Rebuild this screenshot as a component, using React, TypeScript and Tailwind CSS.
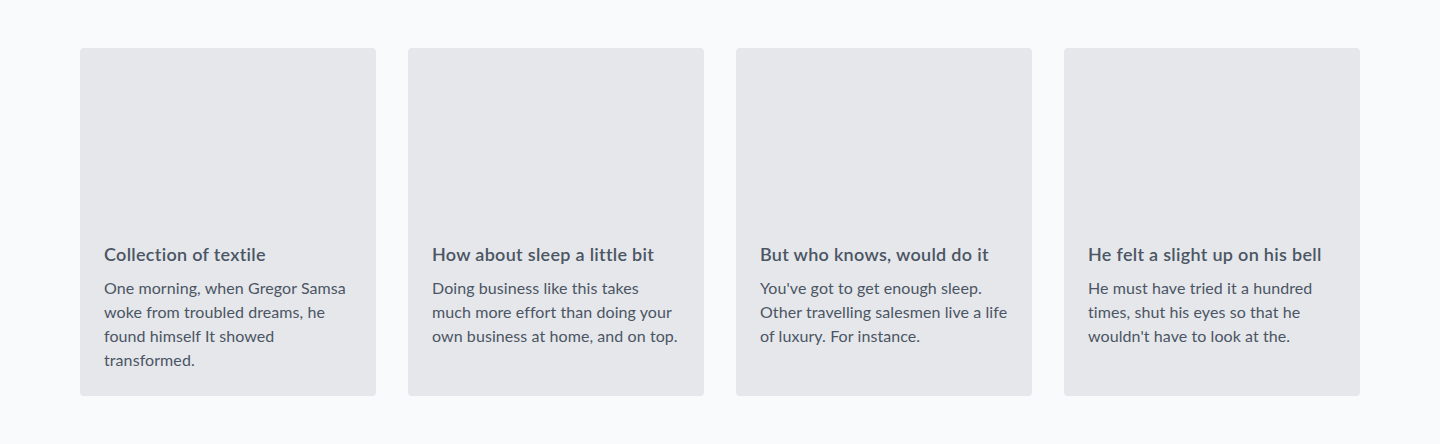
import React from "react";

const cards = [
  {
    title: "Collection of textile",
    body: "One morning, when Gregor Samsa woke from troubled dreams, he found himself It showed transformed.",
  },
  {
    title: "How about sleep a little bit",
    body: "Doing business like this takes much more effort than doing your own business at home, and on top.",
  },
  {
    title: "But who knows, would do it",
    body: "You've got to get enough sleep. Other travelling salesmen live a life of luxury. For instance.",
  },
  {
    title: "He felt a slight up on his bell",
    body: "He must have tried it a hundred times, shut his eyes so that he wouldn't have to look at the.",
  },
];

export default function App() {
  return (
    <div
      className="min-h-[444px] bg-[#f9fafb] px-20 py-12"
      style={{ fontFamily: 'Lato, sans-serif' }}
    >
      <div className="grid grid-cols-4 gap-8">
        {cards.map((c) => (
          <div key={c.title} className="flex flex-col rounded bg-[#e5e7eb]">
            <div className="h-[168px]" />
            <div className="p-6">
              <h3 className="text-lg leading-7 font-semibold tracking-[0.3px] text-[#4b5563]">{c.title}</h3>
              <p className="mt-2 text-base leading-6 tracking-[0.08px] text-[#4b5563]">{c.body}</p>
            </div>
          </div>
        ))}
      </div>
    </div>
  );
}
